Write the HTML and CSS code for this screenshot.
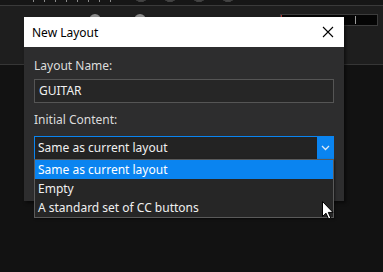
FILE: index.html
```html
<!DOCTYPE html>
<html lang="en">
<head>
    <meta charset="UTF-8">
    <meta name="viewport" content="width=device-width, initial-scale=1.0">
    <title>New Layout</title>
    <link rel="stylesheet" href="styles.css">
</head>
<body>
    <!-- Background app -->
    <div class="app">
        <div class="top-strip">
            <div class="ticks">
                <span></span><span></span><span></span><span></span><span></span><span></span><span></span><span></span>
            </div>
            <div class="knobs-top">
                <span class="knob"></span><span class="knob"></span><span class="knob"></span><span class="knob"></span>
            </div>
        </div>
        <div class="panel">
            <div class="knobs-row">
                <span class="knob"></span><span class="knob"></span>
            </div>
            <div class="meter"><span class="meter-peak"></span><span class="meter-mark"></span></div>
        </div>
    </div>

    <!-- Modal dialog -->
    <div class="dialog">
        <div class="dialog-title">
            <span>New Layout</span>
            <svg class="close" width="12" height="12" viewBox="0 0 12 12">
                <path d="M1 1 L11 11 M11 1 L1 11" stroke="#000" stroke-width="1.1" fill="none"/>
            </svg>
        </div>
        <div class="dialog-body">
            <label class="field-label">Layout Name:</label>
            <div class="text-input">GUITAR</div>
            <label class="field-label">Initial Content:</label>
            <div class="select">
                <span class="select-value">Same as current layout</span>
                <span class="select-arrow">
                    <svg width="9" height="6" viewBox="0 0 9 6"><path d="M1 1 L4.5 4.5 L8 1" stroke="#dfe9f5" stroke-width="1.3" fill="none"/></svg>
                </span>
            </div>
        </div>
    </div>

    <ul class="dropdown">
        <li class="selected">Same as current layout</li>
        <li>Empty</li>
        <li>A standard set of CC buttons</li>
    </ul>

    <svg class="cursor" width="13" height="19" viewBox="0 0 13 19">
        <path d="M0.5 0.5 L0.5 15.5 L4 12.2 L6.6 18 L8.8 17 L6.3 11.4 L11 11.4 Z" fill="#fff" stroke="#000" stroke-width="1"/>
    </svg>
</body>
</html>
```

FILE: styles.css
```css
* {
    margin: 0;
    padding: 0;
    box-sizing: border-box;
}

body {
    font-family: 'Noto Sans', 'Open Sans', sans-serif;
    background-color: #121212;
    width: 383px;
    height: 272px;
    overflow: hidden;
    position: relative;
}

/* Background app */
.top-strip {
    height: 6px;
    background: #161616;
    border-bottom: 1px solid #3a3a3a;
    position: relative;
    overflow: hidden;
}

.ticks {
    display: flex;
    gap: 10px;
    padding-left: 33px;
}

.ticks span {
    width: 1px;
    height: 2px;
    background: #8a8a8a;
}

.knobs-top {
    position: absolute;
    top: -8px;
    left: 135px;
    display: flex;
    gap: 17px;
}

.knob {
    width: 12px;
    height: 10px;
    border-radius: 50%;
    background: #6e6e6e;
    box-shadow: inset 0 -2px 2px #3a3a3a;
}

.panel {
    height: 59px;
    background: #1e1e1e;
    border-bottom: 1px solid #363636;
    display: flex;
    align-items: flex-start;
    justify-content: space-between;
    padding: 8px 5px 0 89px;
}

.knobs-row {
    display: flex;
    gap: 33px;
}

.knobs-row .knob {
    width: 12px;
    height: 12px;
    background: #8c8c8c;
}

.meter {
    width: 98px;
    height: 12px;
    background: #050505;
    border: 1px solid #3c3c3c;
    position: relative;
}

.meter-peak {
    position: absolute;
    left: 0;
    top: 0;
    width: 1px;
    height: 2px;
    background: #b03030;
}

.meter-mark {
    position: absolute;
    left: 74px;
    top: 1px;
    width: 1px;
    height: 8px;
    background: #9a9a9a;
}

/* Dialog */
.dialog {
    position: absolute;
    left: 24px;
    top: 17px;
    width: 320px;
    height: 184px;
    background: #2d2d2e;
    box-shadow: 2px 2px 3px rgba(0, 0, 0, 0.5);
}

.dialog-title {
    height: 30px;
    background: #ffffff;
    color: #000;
    font-size: 12px;
    display: flex;
    align-items: center;
    justify-content: space-between;
    padding: 0 10px 0 8px;
}

.dialog-body {
    padding: 11px 10px 0 10px;
    display: flex;
    flex-direction: column;
}

.field-label {
    color: #dcdcdc;
    font-size: 12px;
    line-height: 16px;
    height: 16px;
}

.text-input {
    margin-top: 5px;
    margin-bottom: 9px;
    height: 24px;
    background: #262626;
    border: 1px solid #555;
    color: #f0f0f0;
    font-size: 12px;
    line-height: 22px;
    padding-left: 4px;
}

.select {
    margin-top: 8px;
    height: 24px;
    background: #232323;
    border: 1px solid #0a84f0;
    display: flex;
    color: #f0f0f0;
    font-size: 12px;
}

.select-value {
    flex: 1;
    line-height: 22px;
    padding-left: 3px;
}

.select-arrow {
    width: 16px;
    background: #0a84f0;
    display: flex;
    align-items: center;
    justify-content: center;
}

/* Dropdown list */
.dropdown {
    position: absolute;
    left: 34px;
    top: 159px;
    width: 300px;
    list-style: none;
    background: #262626;
    border: 1px solid #5a5a5a;
    box-shadow: 1px 1px 2px rgba(0, 0, 0, 0.5);
}

.dropdown li {
    height: 19px;
    line-height: 19px;
    font-size: 12px;
    color: #f0f0f0;
    padding-left: 3px;
}

.dropdown li.selected {
    background: #0a84f0;
    color: #fff;
}

.cursor {
    position: absolute;
    left: 322px;
    top: 201px;
}
```
